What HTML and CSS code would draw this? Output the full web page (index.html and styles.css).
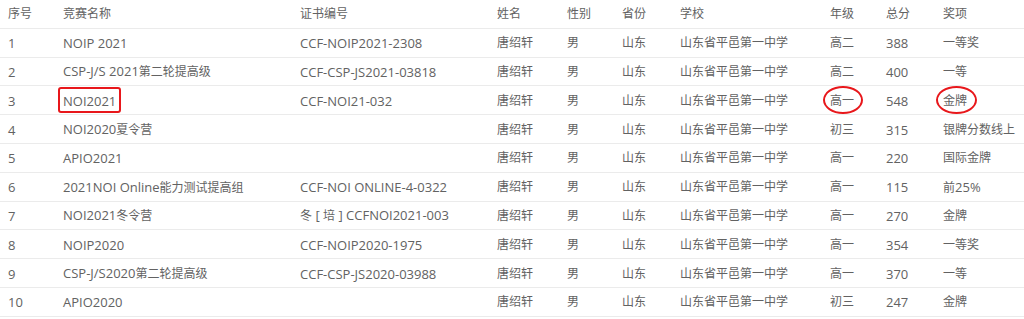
FILE: index.html
```html
<!DOCTYPE html>
<html lang="zh-CN">
<head>
<meta charset="utf-8">
<title>获奖记录</title>
<link rel="stylesheet" href="styles.css">
</head>
<body>
<div class="table">
  <div class="row head">
    <div class="zh">序号</div><div class="zh">竞赛名称</div><div class="zh">证书编号</div><div class="zh">姓名</div><div class="zh">性别</div><div class="zh">省份</div><div class="zh">学校</div><div class="zh">年级</div><div class="zh">总分</div><div class="zh">奖项</div>
  </div>
  <div class="row">
    <div>1</div><div>NOIP 2021</div><div>CCF-NOIP2021-2308</div><div class="zh">唐绍轩</div><div class="zh">男</div><div class="zh">山东</div><div class="zh">山东省平邑第一中学</div><div class="zh">高二</div><div>388</div><div class="zh">一等奖</div>
  </div>
  <div class="row">
    <div>2</div><div>CSP-J/S 2021<span class="zh">第二轮提高级</span></div><div>CCF-CSP-JS2021-03818</div><div class="zh">唐绍轩</div><div class="zh">男</div><div class="zh">山东</div><div class="zh">山东省平邑第一中学</div><div class="zh">高二</div><div>400</div><div class="zh">一等</div>
  </div>
  <div class="row">
    <div>3</div><div><span class="boxed">NOI2021</span></div><div>CCF-NOI21-032</div><div class="zh">唐绍轩</div><div class="zh">男</div><div class="zh">山东</div><div class="zh">山东省平邑第一中学</div><div class="zh"><span class="circled c1">高一</span></div><div>548</div><div class="zh"><span class="circled c2">金牌</span></div>
  </div>
  <div class="row">
    <div>4</div><div>NOI2020<span class="zh">夏令营</span></div><div></div><div class="zh">唐绍轩</div><div class="zh">男</div><div class="zh">山东</div><div class="zh">山东省平邑第一中学</div><div class="zh">初三</div><div>315</div><div class="zh">银牌分数线上</div>
  </div>
  <div class="row">
    <div>5</div><div>APIO2021</div><div></div><div class="zh">唐绍轩</div><div class="zh">男</div><div class="zh">山东</div><div class="zh">山东省平邑第一中学</div><div class="zh">高一</div><div>220</div><div class="zh">国际金牌</div>
  </div>
  <div class="row">
    <div>6</div><div>2021NOI Online<span class="zh">能力测试提高组</span></div><div>CCF-NOI ONLINE-4-0322</div><div class="zh">唐绍轩</div><div class="zh">男</div><div class="zh">山东</div><div class="zh">山东省平邑第一中学</div><div class="zh">高一</div><div>115</div><div><span class="zh">前</span>25%</div>
  </div>
  <div class="row">
    <div>7</div><div>NOI2021<span class="zh">冬令营</span></div><div><span class="zh">冬</span> [ <span class="zh">培</span> ] CCFNOI2021-003</div><div class="zh">唐绍轩</div><div class="zh">男</div><div class="zh">山东</div><div class="zh">山东省平邑第一中学</div><div class="zh">高一</div><div>270</div><div class="zh">金牌</div>
  </div>
  <div class="row">
    <div>8</div><div>NOIP2020</div><div>CCF-NOIP2020-1975</div><div class="zh">唐绍轩</div><div class="zh">男</div><div class="zh">山东</div><div class="zh">山东省平邑第一中学</div><div class="zh">高一</div><div>354</div><div class="zh">一等奖</div>
  </div>
  <div class="row">
    <div>9</div><div>CSP-J/S2020<span class="zh">第二轮提高级</span></div><div>CCF-CSP-JS2020-03988</div><div class="zh">唐绍轩</div><div class="zh">男</div><div class="zh">山东</div><div class="zh">山东省平邑第一中学</div><div class="zh">高一</div><div>370</div><div class="zh">一等</div>
  </div>
  <div class="row">
    <div>10</div><div>APIO2020</div><div></div><div class="zh">唐绍轩</div><div class="zh">男</div><div class="zh">山东</div><div class="zh">山东省平邑第一中学</div><div class="zh">初三</div><div>247</div><div class="zh">金牌</div>
  </div>
</div>
</body>
</html>
```
FILE: styles.css
```css
html, body {
  margin: 0;
  padding: 0;
  background: #ffffff;
}

body {
  font-family: "Open Sans", "Noto Sans CJK SC", sans-serif;
  font-size: 13px;
  color: #626262;
}

.table {
  display: flex;
  flex-direction: column;
}

.row {
  display: grid;
  grid-template-columns: 55px 237px 197px 70px 55px 58px 150px 56px 57px 1fr;
  align-items: center;
  height: 28.8px;
  box-sizing: border-box;
  padding-left: 8px;
  border-bottom: 1px solid #ebebeb;
  white-space: nowrap;
  line-height: 18px;
}

.row > div {
  padding-top: 1px;
}

.zh {
  font-size: 12px;
}

.boxed {
  position: relative;
}

.boxed::after {
  content: "";
  position: absolute;
  left: -5px;
  right: -5px;
  top: -5px;
  bottom: -3px;
  border: 2px solid #e8171b;
  border-radius: 3px;
}

.circled {
  position: relative;
}

.circled::after {
  content: "";
  position: absolute;
  top: -6px;
  bottom: -5px;
  border: 2px solid #e8171b;
  border-radius: 50%;
}

.c1::after {
  left: -7px;
  right: -9px;
}

.c2::after {
  left: -7px;
  right: -10px;
}
```
